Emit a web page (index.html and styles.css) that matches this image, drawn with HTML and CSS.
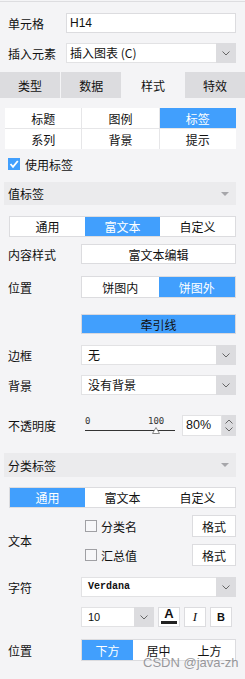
FILE: index.html
```html
<!DOCTYPE html>
<html lang="zh">
<head>
<meta charset="utf-8">
<title>样式面板</title>
<link rel="stylesheet" href="styles.css">
</head>
<body>
<div class="panel">
  <div class="frow top1"><span class="lbl-a">单元格</span><div class="input ctl">H14</div></div>
  <div class="frow top2"><span class="lbl-a">插入元素</span>
    <div class="select ctl"><span class="val">插入图表 (C)</span><span class="arrow"><svg width="8" height="5" viewBox="0 0 8 5"><polyline points="0.5,0.5 4,4 7.5,0.5" fill="none" stroke="#666" stroke-width="1"/></svg></span></div>
  </div>
  <div class="tabs">
    <div class="tab">类型</div><div class="tab">数据</div><div class="tab on">样式</div><div class="tab">特效</div>
  </div>
  <div class="grid">
    <div class="cell">标题</div><div class="cell">图例</div><div class="cell on">标签</div>
    <div class="cell">系列</div><div class="cell">背景</div><div class="cell">提示</div>
  </div>
  <div class="chk-row">
    <span class="cb checked"><svg width="12" height="12" viewBox="0 0 12 12"><polyline points="2.5,6 5,8.8 9.8,3" fill="none" stroke="#fff" stroke-width="1.8"/></svg></span><span class="chk-lbl">使用标签</span>
  </div>
  <div class="header h1"><span>值标签</span><span class="tri"></span></div>
  <div class="seg seg3 s1"><div>通用</div><div class="on">富文本</div><div>自定义</div></div>
  <div class="frow r-content"><span class="lbl">内容样式</span><div class="btn ctl">富文本编辑</div></div>
  <div class="frow r-pos"><span class="lbl">位置</span><div class="seg seg2 ctl"><div>饼图内</div><div class="on">饼图外</div></div></div>
  <div class="frow r-lead"><span class="lbl"></span><div class="btn blue ctl">牵引线</div></div>
  <div class="frow r-border"><span class="lbl">边框</span>
    <div class="select ctl"><span class="val v2">无</span><span class="arrow"><svg width="8" height="5" viewBox="0 0 8 5"><polyline points="0.5,0.5 4,4 7.5,0.5" fill="none" stroke="#666" stroke-width="1"/></svg></span></div>
  </div>
  <div class="frow r-bg"><span class="lbl">背景</span>
    <div class="select ctl"><span class="val v2">没有背景</span><span class="arrow"><svg width="8" height="5" viewBox="0 0 8 5"><polyline points="0.5,0.5 4,4 7.5,0.5" fill="none" stroke="#666" stroke-width="1"/></svg></span></div>
  </div>
  <div class="frow r-opa"><span class="lbl">不透明度</span>
    <svg class="slider" width="99" height="21" viewBox="0 0 99 21">
      <text x="4" y="9" class="sl-t">0</text>
      <text x="67" y="9" class="sl-t">100</text>
      <line x1="4" y1="15.5" x2="94" y2="15.5" stroke="#333" stroke-width="1"/>
      <polygon points="75,12.5 71.5,18.5 78.5,18.5" fill="#fff" stroke="#888" stroke-width="1"/>
    </svg>
    <div class="num">80%</div>
    <div class="spin">
      <svg width="8" height="5" viewBox="0 0 8 5"><polyline points="0.5,4.5 4,1 7.5,4.5" fill="none" stroke="#666" stroke-width="1"/></svg>
      <svg width="8" height="5" viewBox="0 0 8 5"><polyline points="0.5,0.5 4,4 7.5,0.5" fill="none" stroke="#666" stroke-width="1"/></svg>
    </div>
  </div>
  <div class="header h2"><span>分类标签</span><span class="tri"></span></div>
  <div class="seg seg3 s2"><div class="on">通用</div><div>富文本</div><div>自定义</div></div>
  <div class="frow r-text"><span class="lbl">文本</span>
    <div class="ctl col">
      <div class="crow"><span class="cb"></span><span class="cname">分类名</span><span class="btn fmt">格式</span></div>
      <div class="crow"><span class="cb"></span><span class="cname">汇总值</span><span class="btn fmt">格式</span></div>
    </div>
  </div>
  <div class="frow r-font"><span class="lbl">字符</span>
    <div class="select ctl"><span class="val v2 mono">Verdana</span><span class="arrow"><svg width="8" height="5" viewBox="0 0 8 5"><polyline points="0.5,0.5 4,4 7.5,0.5" fill="none" stroke="#666" stroke-width="1"/></svg></span></div>
  </div>
  <div class="frow r-size"><span class="lbl"></span>
    <div class="select small"><span class="val v2 mono2">10</span><span class="arrow"><svg width="8" height="5" viewBox="0 0 8 5"><polyline points="0.5,0.5 4,4 7.5,0.5" fill="none" stroke="#666" stroke-width="1"/></svg></span></div>
    <div class="ibtn"><span class="a-ic">A</span><span class="a-bar"></span></div>
    <div class="ibtn"><span class="i-ic">I</span></div>
    <div class="ibtn"><span class="b-ic">B</span></div>
  </div>
  <div class="frow r-pos2"><span class="lbl">位置</span><div class="seg seg3 ctl"><div class="on">下方</div><div>居中</div><div>上方</div></div></div>
</div>
<div class="watermark">CSDN @java-zh</div>
</body>
</html>
```
FILE: styles.css
```css
* { box-sizing: border-box; margin: 0; padding: 0; }
html, body { background: #f4f4f6; }
body {
  margin: 0;
  width: 245px;
  height: 679px;
  overflow: hidden;
  position: relative;
  font-family: "Noto Sans CJK SC", "Noto Sans", sans-serif;
  font-size: 12px;
  color: #111;
}
.panel {
  margin-top: 1px;
  border-top: 1px solid #dddde0;
  display: flex;
  flex-direction: column;
}
.frow {
  display: flex;
  align-items: center;
  padding: 0 9px 0 8px;
}
.lbl-a { width: 58px; flex: none; white-space: nowrap; }
.lbl { width: 73px; flex: none; white-space: nowrap; }
.ctl { flex: 1; min-width: 0; }

.top1 { margin-top: 11px; }
.top2 { margin-top: 10px; }

.input {
  height: 20px;
  background: #fff;
  border: 1px solid #dcdcdf;
  padding-left: 3px;
  line-height: 18px;
  font-family: "Liberation Sans", "Noto Sans CJK SC", sans-serif;
}
.select {
  height: 20px;
  display: flex;
  background: #fff;
  border: 1px solid #e2e2e4;
  border-right: none;
}
.select .val {
  flex: 1;
  padding-left: 3px;
  line-height: 18px;
  white-space: nowrap;
  overflow: hidden;
}
.select .val.v2 { padding-left: 6px; }
.select .arrow {
  width: 20px;
  margin: -1px 0;
  background: #dcdcdf;
  display: flex;
  align-items: center;
  justify-content: center;
}
.mono { font-family: "Liberation Mono", monospace; font-size: 10px; font-weight: bold; }
.mono2 { font-family: "Liberation Sans", sans-serif; font-size: 11px; }

.tabs {
  margin-top: 9px;
  height: 26px;
  display: grid;
  grid-template-columns: 60px 60px 61px 60px;
  column-gap: 1.3px;
}
.tab {
  background: #dcdcdf;
  display: flex;
  align-items: center;
  justify-content: center;
}
.tab.on { background: #f4f4f6; }

.grid {
  margin: 10px 9px 0 5px;
  display: grid;
  grid-template-columns: repeat(3, 1fr);
  gap: 1px;
  background: #e6e6e8;
}
.cell {
  height: 20px;
  background: #fff;
  display: flex;
  align-items: center;
  justify-content: center;
}
.cell.on { background: #419ffd; color: #fff; }

.chk-row {
  margin-top: 9px;
  padding-left: 8px;
  height: 12px;
  display: flex;
  align-items: center;
}
.cb {
  width: 12px;
  height: 12px;
  flex: none;
  border: 1px solid #a0a0a4;
  background: #f7f7f9;
  display: block;
}
.cb.checked { background: #419ffd; border: none; }
.cb svg { display: block; }
.chk-lbl { margin-left: 5px; }

.header {
  margin: 0 9px 0 4px;
  background: #ebebed;
  padding: 0 7px 0 4px;
  display: flex;
  align-items: center;
  justify-content: space-between;
}
.h1 { margin-top: 12px; height: 23px; }
.h2 { margin-top: 17px; height: 24px; }
.tri {
  width: 0;
  height: 0;
  border-left: 4px solid transparent;
  border-right: 4px solid transparent;
  border-top: 4px solid #a6a6aa;
}

.seg {
  height: 21px;
  display: grid;
  background: #fff;
  border: 1px solid #dcdcdf;
}
.seg3 { grid-template-columns: repeat(3, 1fr); }
.seg2 { grid-template-columns: repeat(2, 1fr); height: 22px; }
.seg > div {
  display: flex;
  align-items: center;
  justify-content: center;
}
.seg > div.on { background: #419ffd; color: #fff; }
.s1 { margin: 11px 9px 0 9px; }
.s2 { margin: 10px 9px 0 9px; }

.btn {
  height: 20px;
  background: #fff;
  border: 1px solid #dcdcdf;
  display: flex;
  align-items: center;
  justify-content: center;
}
.btn.blue { background: #419ffd; border-color: #d8d8de; }

.r-content { margin-top: 7px; }
.r-pos { margin-top: 12px; }
.r-lead { margin-top: 16px; }
.r-border { margin-top: 11px; }
.r-bg { margin-top: 10px; }
.r-opa { margin-top: 20px; height: 21px; }

.slider { display: block; flex: none; }
.sl-t { font-family: "DejaVu Sans Mono", monospace; font-size: 9px; fill: #333; }
.num {
  margin-left: 2px;
  width: 41px;
  height: 21px;
  background: #fff;
  border: 1px solid #e2e2e4;
  padding-left: 3px;
  line-height: 19px;
  font-family: "Liberation Sans", sans-serif;
  font-size: 12.5px;
}
.spin {
  width: 14px;
  height: 21px;
  background: #dcdcdf;
  display: flex;
  flex-direction: column;
  align-items: center;
  justify-content: space-around;
  padding: 2px 0;
}
.spin svg { display: block; }

.r-text { margin-top: 7px; height: 51px; }
.col { display: flex; flex-direction: column; gap: 7px; padding-left: 4px; }
.crow { display: flex; align-items: center; height: 22px; }
.cname { margin-left: 4px; flex: 1; }
.btn.fmt { width: 44px; height: 22px; }

.r-font { margin-top: 11px; }
.r-size { margin-top: 10px; }
.select.small { width: 73px; flex: none; }
.ibtn {
  width: 22px;
  height: 20px;
  margin-left: 4px;
  background: #fff;
  border: 1px solid #dcdcdf;
  display: flex;
  flex-direction: column;
  align-items: center;
  justify-content: center;
  position: relative;
}
.a-ic {
  font-family: "Liberation Sans", sans-serif;
  font-weight: bold;
  font-size: 13px;
  line-height: 11px;
  margin-top: -3px;
}
.a-bar {
  display: block;
  width: 16px;
  height: 3px;
  background: #222;
  margin-top: 2px;
}
.i-ic {
  font-family: "Liberation Serif", serif;
  font-style: italic;
  font-size: 13px;
}
.b-ic {
  font-family: "Liberation Sans", sans-serif;
  font-weight: bold;
  font-size: 11px;
}
.r-pos2 { margin-top: 12px; }
.r-pos2 .seg { height: 22px; }

.watermark {
  position: absolute;
  left: 143px;
  top: 655px;
  font-family: "Liberation Sans", sans-serif;
  font-size: 13px;
  color: rgba(120, 120, 124, 0.75);
  white-space: nowrap;
}
```
